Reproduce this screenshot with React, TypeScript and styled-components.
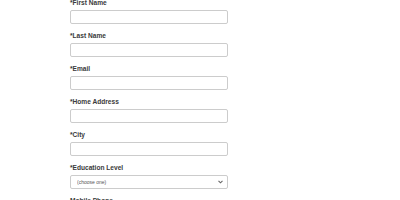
import React from 'react'
import styled, { createGlobalStyle } from 'styled-components';

const GlobalStyle = createGlobalStyle`
  body {
    margin: 0;
    background: #fff;
    font-family: "Liberation Sans", Arial, sans-serif;
  }
`

const fields = ['First Name', 'Last Name', 'Email', 'Home Address', 'City']

const App: React.FC = () => {
  return (
    <>
      <GlobalStyle />
      <FormWrap>
        {
          fields.map((name) => {
            return <Field key={name}>
              <Label>*{name}</Label>
              <TextInput type="text" />
            </Field>;
          })
        }
        <Field>
          <Label>*Education Level</Label>
          <SelectWrap>
            <Select defaultValue="">
              <option value="">(choose one)</option>
            </Select>
            <Chevron width="5" height="4" viewBox="0 0 5 4">
              <path d="M0.5 0.8 L2.5 2.8 L4.5 0.8" fill="none" stroke="#666" strokeWidth="1.1" />
            </Chevron>
          </SelectWrap>
        </Field>
        <Field>
          <Label>Mobile Phone</Label>
          <TextInput type="text" />
        </Field>
      </FormWrap>
    </>
  )
}

const FormWrap = styled.div`
  width: 158px;
  padding: 0 0 0 70px;
  margin-top: -1px;
  display: flex;
  flex-direction: column;
  gap: 8px;
`

const Field = styled.div`
  display: flex;
  flex-direction: column;
  gap: 3px;
`

const Label = styled.label`
  font-size: 6.6px;
  line-height: 8px;
  font-weight: 700;
  color: #3a3a3a;
`

const TextInput = styled.input`
  display: block;
  box-sizing: border-box;
  width: 158px;
  height: 14px;
  margin: 0;
  border: 1px solid #ccc;
  border-radius: 2px;
  background: #fff;
  outline: none;
`

const SelectWrap = styled.div`
  position: relative;
  width: 158px;
  height: 14px;
`

const Select = styled.select`
  display: block;
  box-sizing: border-box;
  appearance: none;
  width: 158px;
  height: 14px;
  margin: 0;
  padding: 0 0 0 6px;
  border: 1px solid #ccc;
  border-radius: 2px;
  background: #fff;
  font-family: "Liberation Sans", Arial, sans-serif;
  font-size: 5px;
  color: #555;
  outline: none;
`

const Chevron = styled.svg`
  position: absolute;
  right: 5px;
  top: 5px;
  pointer-events: none;
`

export default App;
